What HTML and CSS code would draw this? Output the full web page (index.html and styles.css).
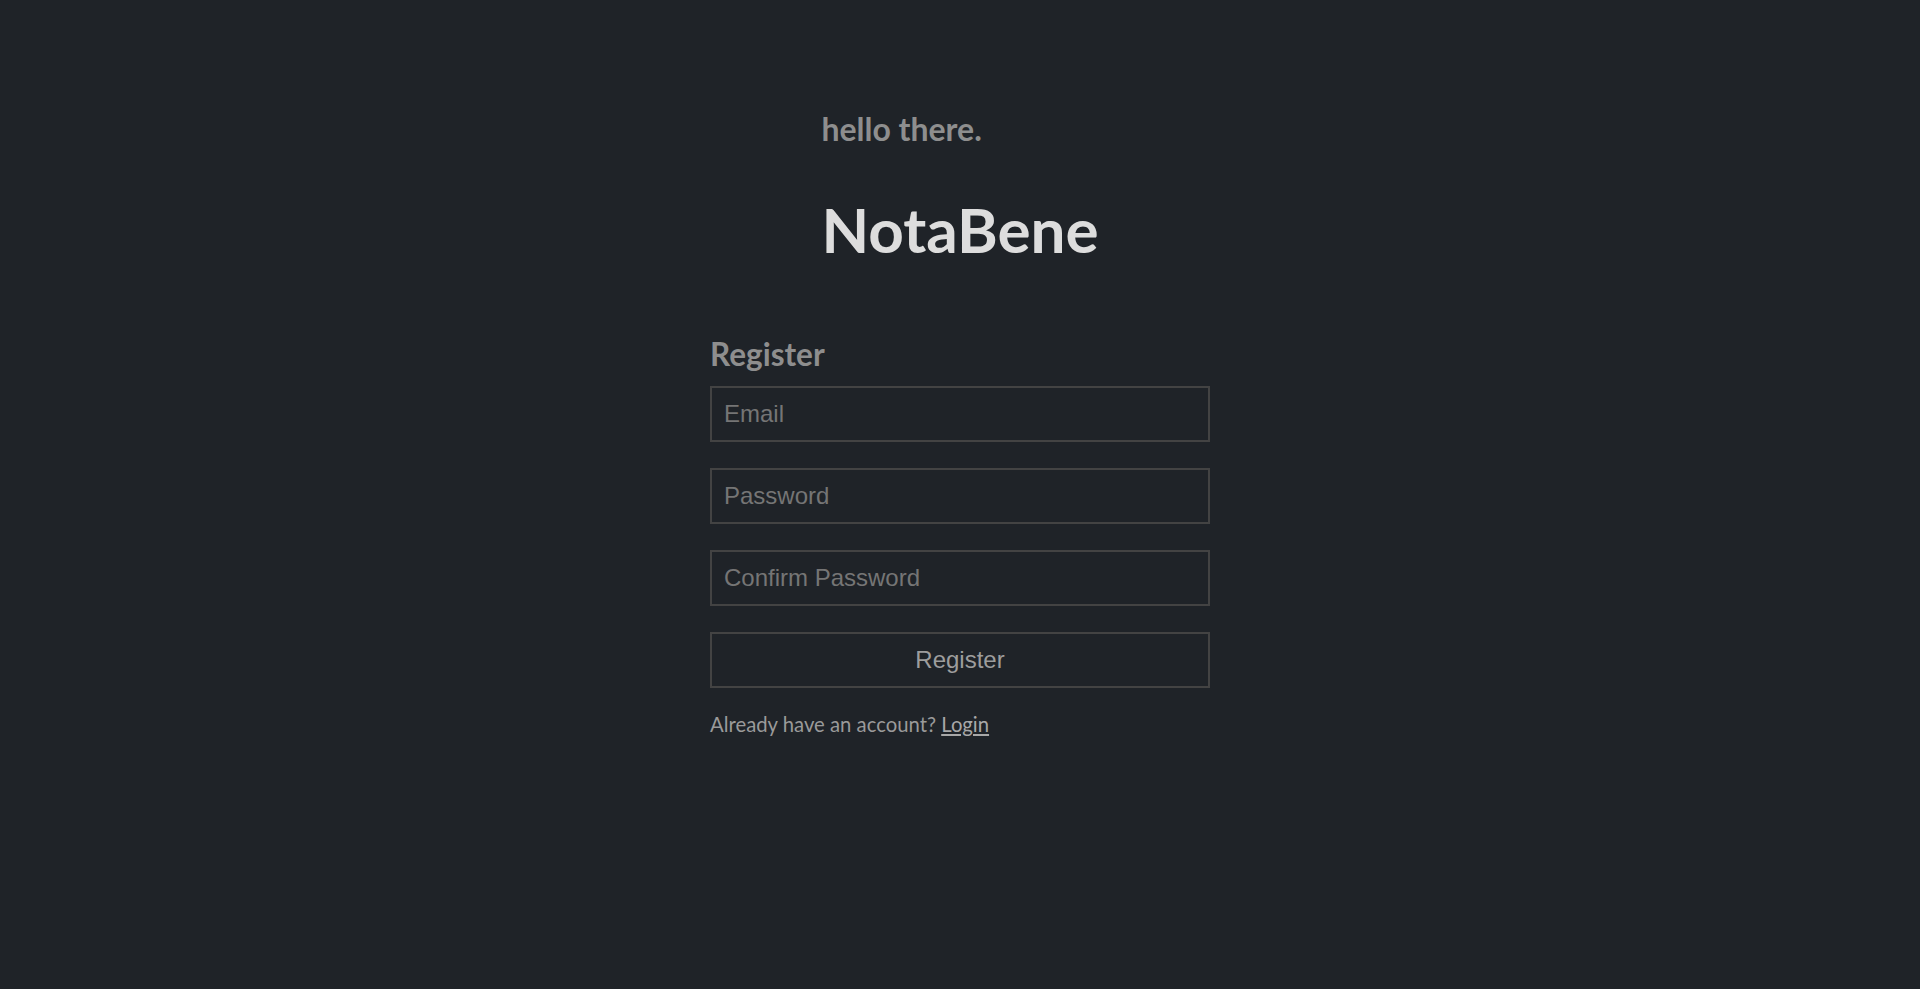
FILE: index.html
```html
<!DOCTYPE html>
<html lang="en">
<head>
<meta charset="utf-8">
<title>NotaBene - Register</title>
<link rel="stylesheet" href="styles.css">
</head>
<body>
<main class="page">
  <header class="brand">
    <h2 class="greeting">hello there.</h2>
    <h1 class="title">NotaBene</h1>
  </header>
  <form class="auth-form">
    <h3 class="form-title">Register</h3>
    <input class="field" type="email" placeholder="Email">
    <input class="field" type="password" placeholder="Password">
    <input class="field" type="password" placeholder="Confirm Password">
    <button class="submit" type="button">Register</button>
    <p class="switch">Already have an account? <a class="switch-link" href="#">Login</a></p>
  </form>
</main>
</body>
</html>
```
FILE: styles.css
```css
html, body {
  margin: 0;
  padding: 0;
  background: #1f2328;
}

body {
  font-family: Lato, "Open Sans", sans-serif;
  min-height: 989px;
}

.page {
  display: flex;
  flex-direction: column;
  align-items: center;
  padding-top: 109px;
}

.brand {
  display: flex;
  flex-direction: column;
  align-items: flex-start;
}

.greeting {
  margin: 0;
  font-size: 32px;
  line-height: 40px;
  font-weight: 700;
  color: #8e8e8e;
}

.title {
  margin: 44px 0 0;
  font-size: 62px;
  line-height: 72px;
  font-weight: 700;
  color: #dddddd;
}

.auth-form {
  width: 500px;
  margin-top: 71px;
  display: flex;
  flex-direction: column;
}

.form-title {
  margin: 0 0 14px;
  font-size: 31.5px;
  line-height: 36px;
  font-weight: 700;
  color: #8e8e8e;
}

.field,
.submit {
  box-sizing: border-box;
  height: 56px;
  width: 100%;
  margin: 0 0 26px;
  padding: 0 12px;
  border: 2px solid #434343;
  background: transparent;
  font-family: "Liberation Sans", Arial, sans-serif;
  font-size: 24px;
  color: #9a9a9a;
  outline: none;
}

.field::placeholder {
  color: #757575;
}

.submit {
  margin-bottom: 23px;
  text-align: center;
  color: #9d9d9d;
  cursor: pointer;
}

.switch {
  margin: 0;
  font-size: 20.3px;
  line-height: 26px;
  color: #9a9a9a;
}

.switch-link {
  color: #a8a8a8;
  text-decoration: underline;
}
```
